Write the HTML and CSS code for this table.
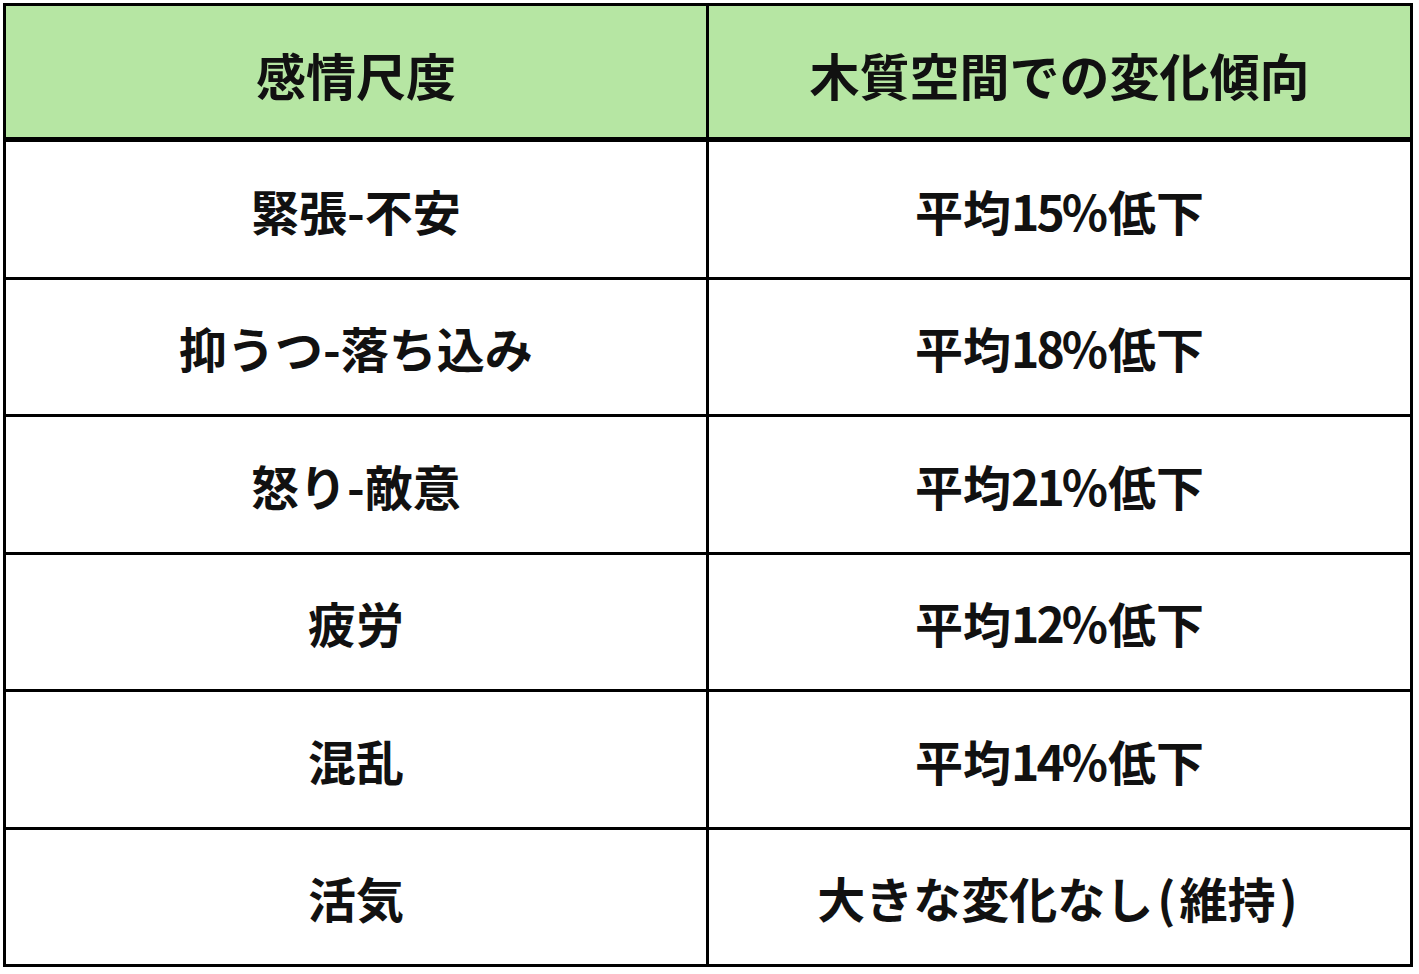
FILE: index.html
```html
<!DOCTYPE html>
<html lang="ja">
<head>
<meta charset="utf-8">
<title>感情尺度</title>
<link rel="stylesheet" href="styles.css">
</head>
<body>
<div class="table">
  <div class="cell head">感情尺度</div>
  <div class="cell head">木質空間での変化傾向</div>
  <div class="cell">緊張-不安</div>
  <div class="cell">平均<span class="num">15%</span>低下</div>
  <div class="cell">抑うつ-落ち込み</div>
  <div class="cell">平均<span class="num">18%</span>低下</div>
  <div class="cell">怒り-敵意</div>
  <div class="cell">平均<span class="num">21%</span>低下</div>
  <div class="cell">疲労</div>
  <div class="cell">平均<span class="num">12%</span>低下</div>
  <div class="cell">混乱</div>
  <div class="cell">平均<span class="num">14%</span>低下</div>
  <div class="cell">活気</div>
  <div class="cell">大きな変化なし<span class="paren">(</span>維持<span class="paren">)</span></div>
</div>
</body>
</html>
```
FILE: styles.css
```css
html, body {
  margin: 0;
  padding: 0;
  background: #ffffff;
}
body {
  padding: 3px 0 0 3px;
  font-family: "Noto Sans CJK JP", "Noto Sans", sans-serif;
}
.table {
  width: 1404px;
  height: 958px;
  border: 3px solid #000;
  background: #000;
  display: grid;
  grid-template-columns: 700px 701px;
  grid-template-rows: 133px repeat(6, 1fr);
  gap: 3px;
}
.cell {
  background: #fff;
  display: flex;
  align-items: center;
  justify-content: center;
  font-size: 48px;
  font-weight: 700;
  color: #111;
  padding-top: 1px;
  box-sizing: border-box;
}
.head {
  background: #b6e6a3;
  font-size: 50px;
  border-bottom: 2px solid #000;
  padding-top: 5px;
}
.num {
  letter-spacing: -3px;
  margin-right: 3px;
}
.paren {
  margin: 0 4px;
}
```
